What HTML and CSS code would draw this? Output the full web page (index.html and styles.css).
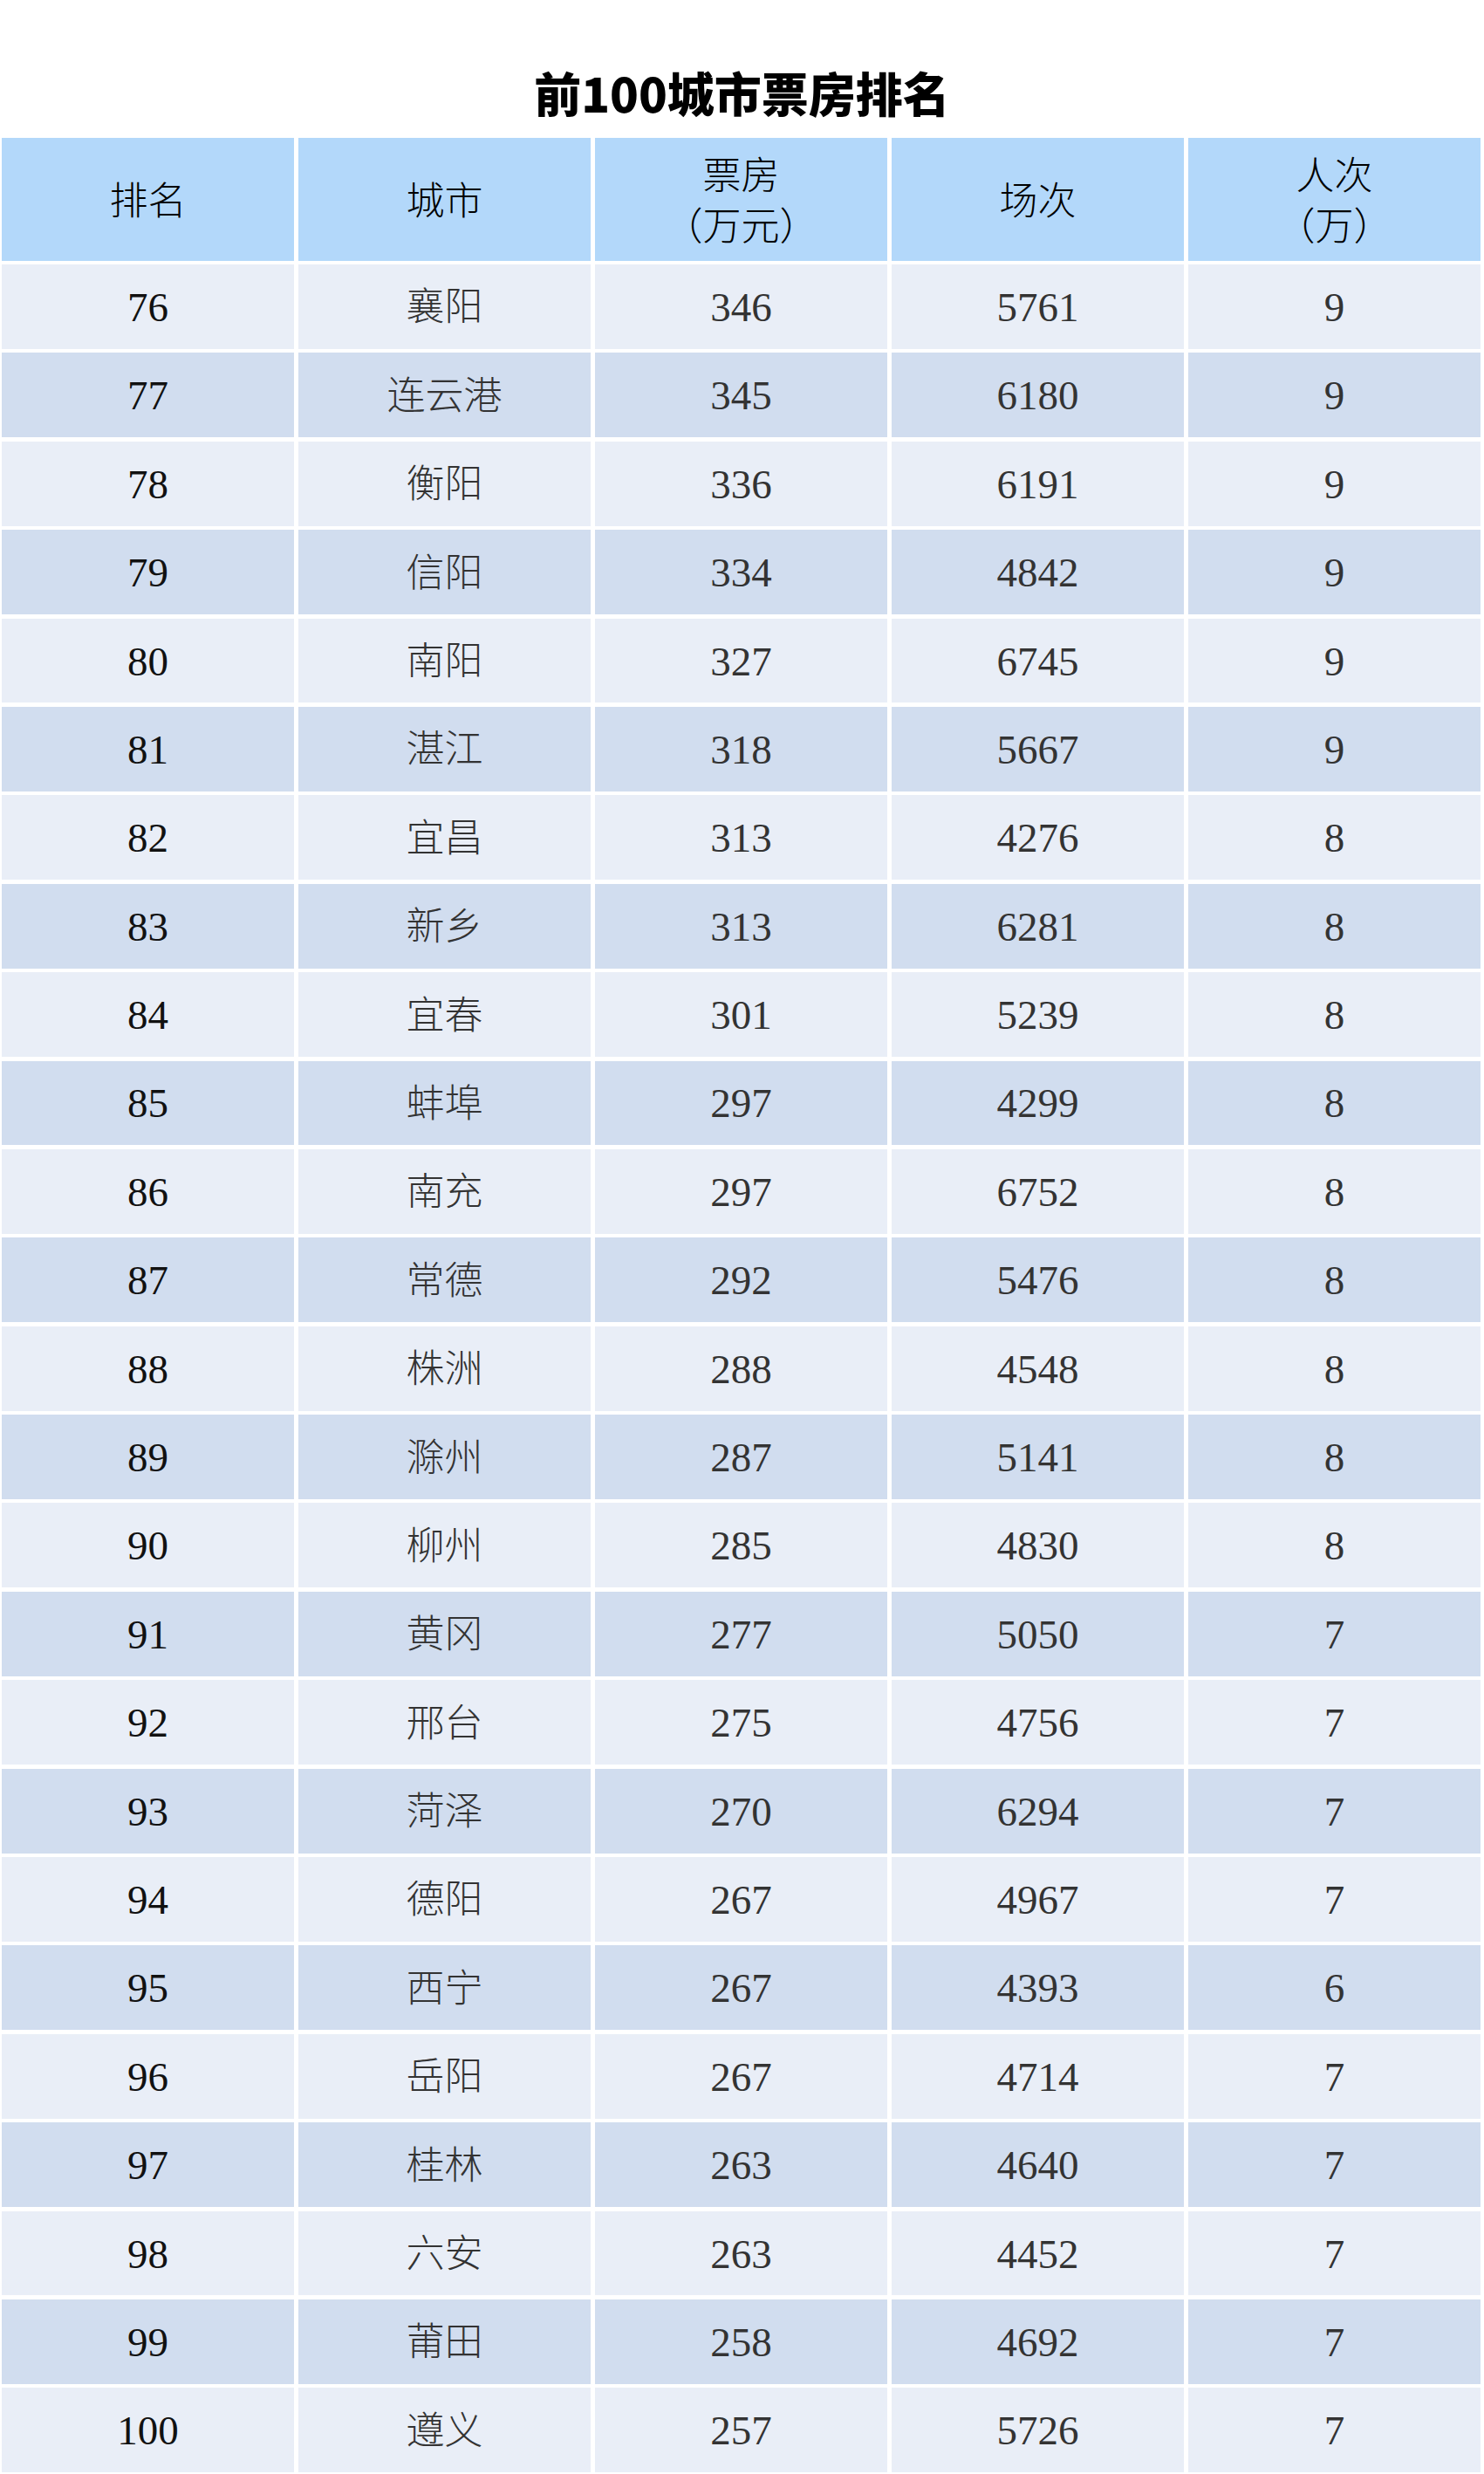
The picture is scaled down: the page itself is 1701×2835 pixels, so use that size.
FILE: index.html
```html
<!DOCTYPE html>
<html lang="zh-CN">
<head>
<meta charset="utf-8">
<title>前100城市票房排名</title>
<link rel="stylesheet" href="styles.css">
</head>
<body>
<div class="page">
  <h1 class="title">前100城市票房排名</h1>
  <div class="grid">
    <div class="hd">排名</div>
    <div class="hd">城市</div>
    <div class="hd two"><span>票房</span><span>（万元）</span></div>
    <div class="hd">场次</div>
    <div class="hd two"><span>人次</span><span>（万）</span></div>

    <div class="c odd rank">76</div><div class="c odd city">襄阳</div><div class="c odd num">346</div><div class="c odd num">5761</div><div class="c odd num">9</div>
    <div class="c even rank">77</div><div class="c even city">连云港</div><div class="c even num">345</div><div class="c even num">6180</div><div class="c even num">9</div>
    <div class="c odd rank">78</div><div class="c odd city">衡阳</div><div class="c odd num">336</div><div class="c odd num">6191</div><div class="c odd num">9</div>
    <div class="c even rank">79</div><div class="c even city">信阳</div><div class="c even num">334</div><div class="c even num">4842</div><div class="c even num">9</div>
    <div class="c odd rank">80</div><div class="c odd city">南阳</div><div class="c odd num">327</div><div class="c odd num">6745</div><div class="c odd num">9</div>
    <div class="c even rank">81</div><div class="c even city">湛江</div><div class="c even num">318</div><div class="c even num">5667</div><div class="c even num">9</div>
    <div class="c odd rank">82</div><div class="c odd city">宜昌</div><div class="c odd num">313</div><div class="c odd num">4276</div><div class="c odd num">8</div>
    <div class="c even rank">83</div><div class="c even city">新乡</div><div class="c even num">313</div><div class="c even num">6281</div><div class="c even num">8</div>
    <div class="c odd rank">84</div><div class="c odd city">宜春</div><div class="c odd num">301</div><div class="c odd num">5239</div><div class="c odd num">8</div>
    <div class="c even rank">85</div><div class="c even city">蚌埠</div><div class="c even num">297</div><div class="c even num">4299</div><div class="c even num">8</div>
    <div class="c odd rank">86</div><div class="c odd city">南充</div><div class="c odd num">297</div><div class="c odd num">6752</div><div class="c odd num">8</div>
    <div class="c even rank">87</div><div class="c even city">常德</div><div class="c even num">292</div><div class="c even num">5476</div><div class="c even num">8</div>
    <div class="c odd rank">88</div><div class="c odd city">株洲</div><div class="c odd num">288</div><div class="c odd num">4548</div><div class="c odd num">8</div>
    <div class="c even rank">89</div><div class="c even city">滁州</div><div class="c even num">287</div><div class="c even num">5141</div><div class="c even num">8</div>
    <div class="c odd rank">90</div><div class="c odd city">柳州</div><div class="c odd num">285</div><div class="c odd num">4830</div><div class="c odd num">8</div>
    <div class="c even rank">91</div><div class="c even city">黄冈</div><div class="c even num">277</div><div class="c even num">5050</div><div class="c even num">7</div>
    <div class="c odd rank">92</div><div class="c odd city">邢台</div><div class="c odd num">275</div><div class="c odd num">4756</div><div class="c odd num">7</div>
    <div class="c even rank">93</div><div class="c even city">菏泽</div><div class="c even num">270</div><div class="c even num">6294</div><div class="c even num">7</div>
    <div class="c odd rank">94</div><div class="c odd city">德阳</div><div class="c odd num">267</div><div class="c odd num">4967</div><div class="c odd num">7</div>
    <div class="c even rank">95</div><div class="c even city">西宁</div><div class="c even num">267</div><div class="c even num">4393</div><div class="c even num">6</div>
    <div class="c odd rank">96</div><div class="c odd city">岳阳</div><div class="c odd num">267</div><div class="c odd num">4714</div><div class="c odd num">7</div>
    <div class="c even rank">97</div><div class="c even city">桂林</div><div class="c even num">263</div><div class="c even num">4640</div><div class="c even num">7</div>
    <div class="c odd rank">98</div><div class="c odd city">六安</div><div class="c odd num">263</div><div class="c odd num">4452</div><div class="c odd num">7</div>
    <div class="c even rank">99</div><div class="c even city">莆田</div><div class="c even num">258</div><div class="c even num">4692</div><div class="c even num">7</div>
    <div class="c odd rank">100</div><div class="c odd city">遵义</div><div class="c odd num">257</div><div class="c odd num">5726</div><div class="c odd num">7</div>
  </div>
</div>
</body>
</html>
```
FILE: styles.css
```css
html, body {
  margin: 0;
  padding: 0;
  background: #ffffff;
}

.page {
  width: 1701px;
  height: 2835px;
  overflow: hidden;
  background: #ffffff;
}

.title {
  box-sizing: border-box;
  height: 158px;
  margin: 0;
  padding-top: 79px;
  font-family: "Noto Sans CJK SC", "Noto Sans", sans-serif;
  font-size: 54px;
  font-weight: 900;
  line-height: 1;
  text-align: center;
  color: #000000;
}

.grid {
  display: grid;
  grid-template-columns: repeat(5, 335px);
  grid-template-rows: 140.5px repeat(25, 96.9px);
  column-gap: 5px;
  row-gap: 4.5px;
  padding-left: 2px;
}

.hd {
  display: flex;
  flex-direction: column;
  align-items: center;
  justify-content: center;
  background: #b3d8fa;
  font-family: "Noto Sans CJK SC", sans-serif;
  font-weight: 300;
  font-size: 44px;
  line-height: 58px;
  color: #000000;
  padding-bottom: 2px;
  box-sizing: border-box;
}

.c {
  display: flex;
  align-items: center;
  justify-content: center;
}

.odd {
  background: #e9eef7;
}

.even {
  background: #d1ddef;
}

.rank, .num {
  font-family: "Liberation Serif", serif;
  font-size: 47px;
  line-height: 1;
  padding-top: 2px;
  box-sizing: border-box;
}

.rank {
  color: #111111;
}

.num {
  color: #333333;
}

.city {
  font-family: "Noto Sans CJK SC", sans-serif;
  font-weight: 300;
  font-size: 44px;
  line-height: 1;
  color: #333333;
  padding-bottom: 6px;
  box-sizing: border-box;
}
```
